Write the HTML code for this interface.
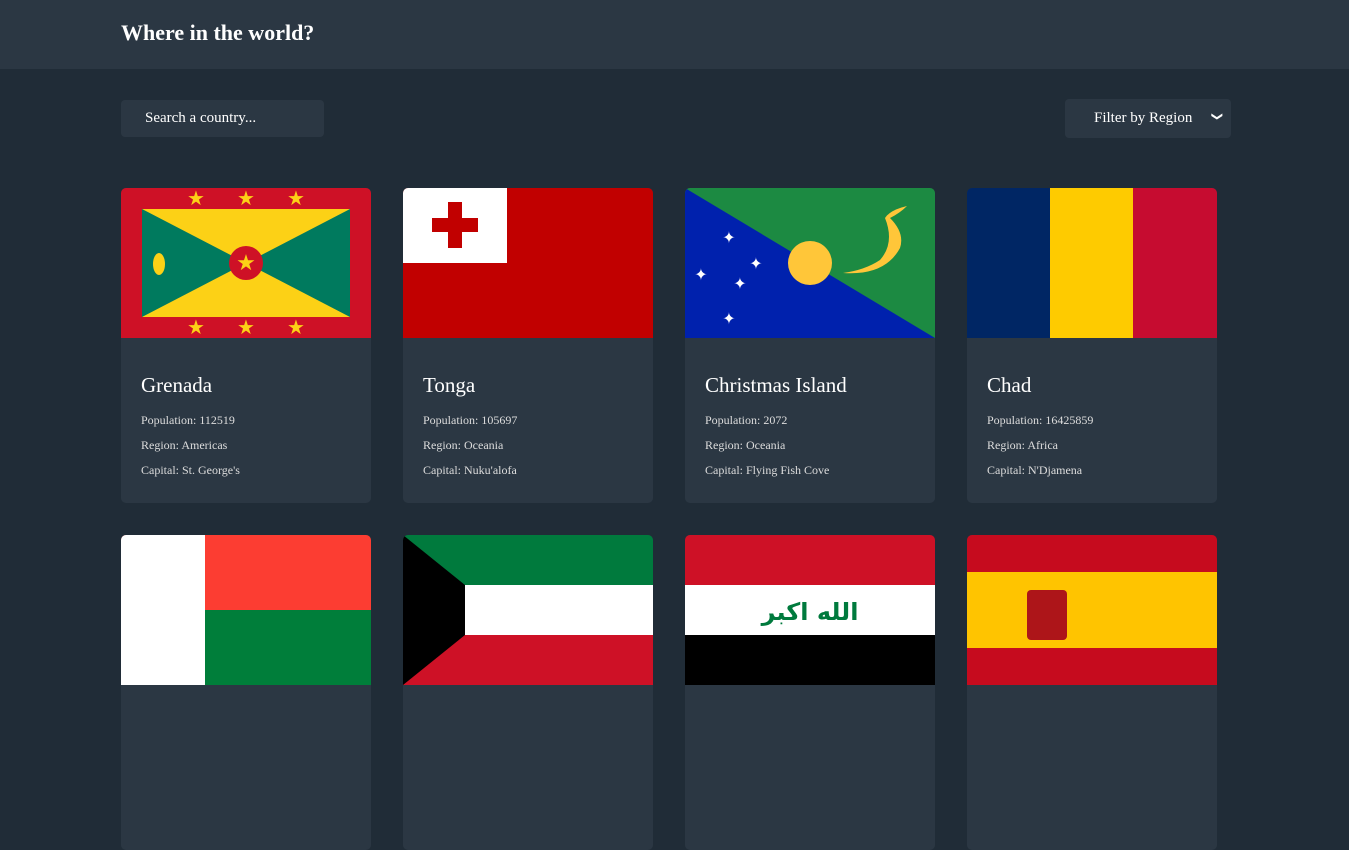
<!DOCTYPE html><html><head><meta charset="utf-8"><style>
*{margin:0;padding:0;box-sizing:border-box}
html,body{width:1349px;height:654px;overflow:hidden}
body{background:#202c37;font-family:"Liberation Serif",serif;color:#fff}
.hdr{height:69px;background:#2b3743;position:relative}
.hdr h1{position:absolute;left:121px;top:20px;font-size:22px;font-weight:bold}
.search{position:absolute;left:121px;top:100px;width:203px;height:37px;background:#2b3743;border-radius:4px;font-size:15px;padding:10px 0 0 24px}
.filter{position:absolute;left:1065px;top:99px;width:166px;height:39px;background:#2b3743;border-radius:4px;font-size:15px;padding:11px 0 0 29px}
.filter span{position:absolute;right:9px;top:11px;font-size:11px;transform:rotate(90deg)}
.card{position:absolute;width:250px;height:315px;background:#2b3743;border-radius:5px;overflow:hidden}
.card svg{display:block;width:250px;height:150px}
.card h2{font-size:21px;font-weight:normal;margin:35px 0 0 20px}
.card p{font-size:12px;color:#ddd;margin:15px 0 0 20px}
.card p+p{margin-top:10px}
</style></head><body>
<div class="hdr"><h1>Where in the world?</h1></div>
<div class="search">Search a country...</div>
<div class="filter">Filter by Region<span>&#10095;</span></div>

<div class="card" style="left:121px;top:188px"><svg viewBox="0 0 250 150"><rect width="250" height="150" fill="#ce1126"/><rect x="21" y="21" width="208" height="108" fill="#fcd116"/><polygon points="21,21 125,75 21,129" fill="#007a5e"/><polygon points="229,21 125,75 229,129" fill="#007a5e"/><circle cx="125" cy="75" r="17" fill="#ce1126"/><text x="125" y="82" font-size="22" fill="#fcd116" text-anchor="middle">★</text><g fill="#fcd116" font-size="20" text-anchor="middle"><text x="75" y="17">★</text><text x="125" y="17">★</text><text x="175" y="17">★</text><text x="75" y="146">★</text><text x="125" y="146">★</text><text x="175" y="146">★</text></g><ellipse cx="38" cy="76" rx="6" ry="11" fill="#fcd116"/></svg><h2>Grenada</h2><p>Population: 112519</p><p>Region: Americas</p><p>Capital: St. George's</p></div>

<div class="card" style="left:403px;top:188px"><svg viewBox="0 0 250 150"><rect width="250" height="150" fill="#c10000"/><rect width="104" height="75" fill="#fff"/><rect x="45" y="14" width="14" height="46" fill="#c10000"/><rect x="29" y="30" width="46" height="14" fill="#c10000"/></svg><h2>Tonga</h2><p>Population: 105697</p><p>Region: Oceania</p><p>Capital: Nuku'alofa</p></div>

<div class="card" style="left:685px;top:188px"><svg viewBox="0 0 250 150"><rect width="250" height="150" fill="#1c8a42"/><polygon points="0,0 250,150 0,150" fill="#0021ad"/><circle cx="125" cy="75" r="22" fill="#ffc639"/><path d="M158 85 Q200 88 215 60 Q220 45 205 30 Q215 25 222 18 Q205 22 200 30 Q210 55 195 72 Q180 82 158 85Z" fill="#ffc639"/><g fill="#fff" font-size="16" text-anchor="middle"><text x="44" y="55">✦</text><text x="16" y="92">✦</text><text x="71" y="81">✦</text><text x="55" y="101">✦</text><text x="44" y="136">✦</text></g></svg><h2>Christmas Island</h2><p>Population: 2072</p><p>Region: Oceania</p><p>Capital: Flying Fish Cove</p></div>

<div class="card" style="left:967px;top:188px"><svg viewBox="0 0 250 150"><rect width="84" height="150" fill="#002664"/><rect x="83" width="84" height="150" fill="#fecb00"/><rect x="166" width="84" height="150" fill="#c60c30"/></svg><h2>Chad</h2><p>Population: 16425859</p><p>Region: Africa</p><p>Capital: N'Djamena</p></div>

<div class="card" style="left:121px;top:535px"><svg viewBox="0 0 250 150"><rect width="250" height="150" fill="#fc3d32"/><rect y="75" width="250" height="75" fill="#007e3a"/><rect width="84" height="150" fill="#fff"/></svg></div>
<div class="card" style="left:403px;top:535px"><svg viewBox="0 0 250 150"><rect width="250" height="50" fill="#007a3d"/><rect y="50" width="250" height="50" fill="#fff"/><rect y="100" width="250" height="50" fill="#ce1126"/><polygon points="0,0 62,50 62,100 0,150" fill="#000"/></svg></div>
<div class="card" style="left:685px;top:535px"><svg viewBox="0 0 250 150"><rect width="250" height="50" fill="#ce1126"/><rect y="50" width="250" height="50" fill="#fff"/><rect y="100" width="250" height="50" fill="#000"/><text x="125" y="85" font-size="24" fill="#007a3d" text-anchor="middle" font-weight="bold" font-family="DejaVu Sans">الله اكبر</text></svg></div>
<div class="card" style="left:967px;top:535px"><svg viewBox="0 0 250 150"><rect width="250" height="150" fill="#c60b1e"/><rect y="37" width="250" height="76" fill="#ffc400"/><rect x="60" y="55" width="40" height="50" fill="#ad1519" rx="4"/></svg></div>
</body></html>
